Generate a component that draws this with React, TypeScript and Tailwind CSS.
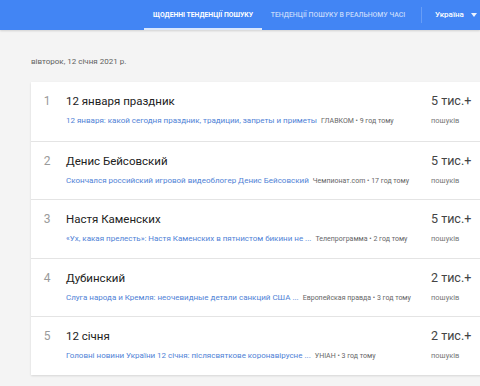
import type { ReactNode } from "react";

// Google Trends — daily search trends list (Ukraine), clipped to a small viewport.

type Trend = {
  rank: number;
  title: string;
  link: string;
  source: string;
  ago: string;
  count: string;
};

const trends: Trend[] = [
  {
    rank: 1,
    title: "12 января праздник",
    link: "12 января: какой сегодня праздник, традиции, запреты и приметы",
    source: "ГЛАВКОМ",
    ago: "9 год тому",
    count: "5 тис.+",
  },
  {
    rank: 2,
    title: "Денис Бейсовский",
    link: "Скончался российский игровой видеоблогер Денис Бейсовский",
    source: "Чемпионат.com",
    ago: "17 год тому",
    count: "5 тис.+",
  },
  {
    rank: 3,
    title: "Настя Каменских",
    link: "«Ух, какая прелесть»: Настя Каменских в пятнистом бикини не ...",
    source: "Телепрограмма",
    ago: "2 год тому",
    count: "5 тис.+",
  },
  {
    rank: 4,
    title: "Дубинский",
    link: "Слуга народа и Кремля: неочевидные детали санкций США ...",
    source: "Европейская правда",
    ago: "3 год тому",
    count: "2 тис.+",
  },
  {
    rank: 5,
    title: "12 січня",
    link: "Головні новини України 12 січня: післясвяткове коронавірусне ...",
    source: "УНІАН",
    ago: "3 год тому",
    count: "2 тис.+",
  },
];

function Header(): ReactNode {
  return (
    <header className="flex h-[30px] items-stretch bg-[#4285f4] pl-[144px] shadow-[0_1px_2px_rgba(0,0,0,0.15)]">
      <div className="flex w-[118px] items-center justify-center border-b-2 border-white/80 pt-[2px] text-[6.8px] font-bold text-white">
        ЩОДЕННІ ТЕНДЕНЦІЇ ПОШУКУ
      </div>
      <div className="flex w-[152px] items-center justify-center text-[6.9px] font-medium text-white/70">
        ТЕНДЕНЦІЇ ПОШУКУ В РЕАЛЬНОМУ ЧАСІ
      </div>
      <div className="my-[7px] ml-[7px] w-px bg-white/20" />
      <div className="flex items-center gap-[7px] pl-[13px] text-[8px] font-medium text-white">
        Україна
        <span className="h-0 w-0 border-x-[3px] border-t-[4px] border-x-transparent border-t-white/90" />
      </div>
    </header>
  );
}

function Row({ t }: { t: Trend }): ReactNode {
  return (
    <div className="flex h-[58.5px] border-t border-[#e4e4e4] first:border-t-0">
      <div className="ml-[10px] w-[12px] shrink-0 pt-[10px] text-center text-[12px] leading-[18px] text-[#9a9a9a]">
        {t.rank}
      </div>
      <div className="ml-[13px] w-[365px] shrink-0 pt-[10px]">
        <div className="text-[11.5px] leading-[18px] text-[#222]">{t.title}</div>
        <div className="mt-[5px] flex items-baseline whitespace-nowrap leading-[12px]">
          <span className="text-[8px] text-[#4f82d6]">{t.link}</span>
          <span className="ml-[4px] text-[7px] text-[#666]">
            {t.source} • {t.ago}
          </span>
        </div>
      </div>
      <div className="pt-[10px]">
        <div className="text-[12.5px] leading-[18px] text-[#444]">{t.count}</div>
        <div className="mt-[5px] text-[7.5px] leading-[12px] text-[#777]">пошуків</div>
      </div>
    </div>
  );
}

export default function App(): ReactNode {
  return (
    <div className="h-[386px] w-[480px] overflow-hidden bg-[#f4f4f4] font-['Roboto',sans-serif]">
      <Header />
      <div className="pl-[31px] pt-[25px] text-[8px] leading-[14px] text-[#616161]">
        вівторок, 12 січня 2021 р.
      </div>
      <div className="ml-[31px] mt-[13px] w-[470px] bg-white shadow-[0_1px_2px_rgba(0,0,0,0.12)]">
        {trends.map((t) => (
          <Row key={t.rank} t={t} />
        ))}
      </div>
    </div>
  );
}
